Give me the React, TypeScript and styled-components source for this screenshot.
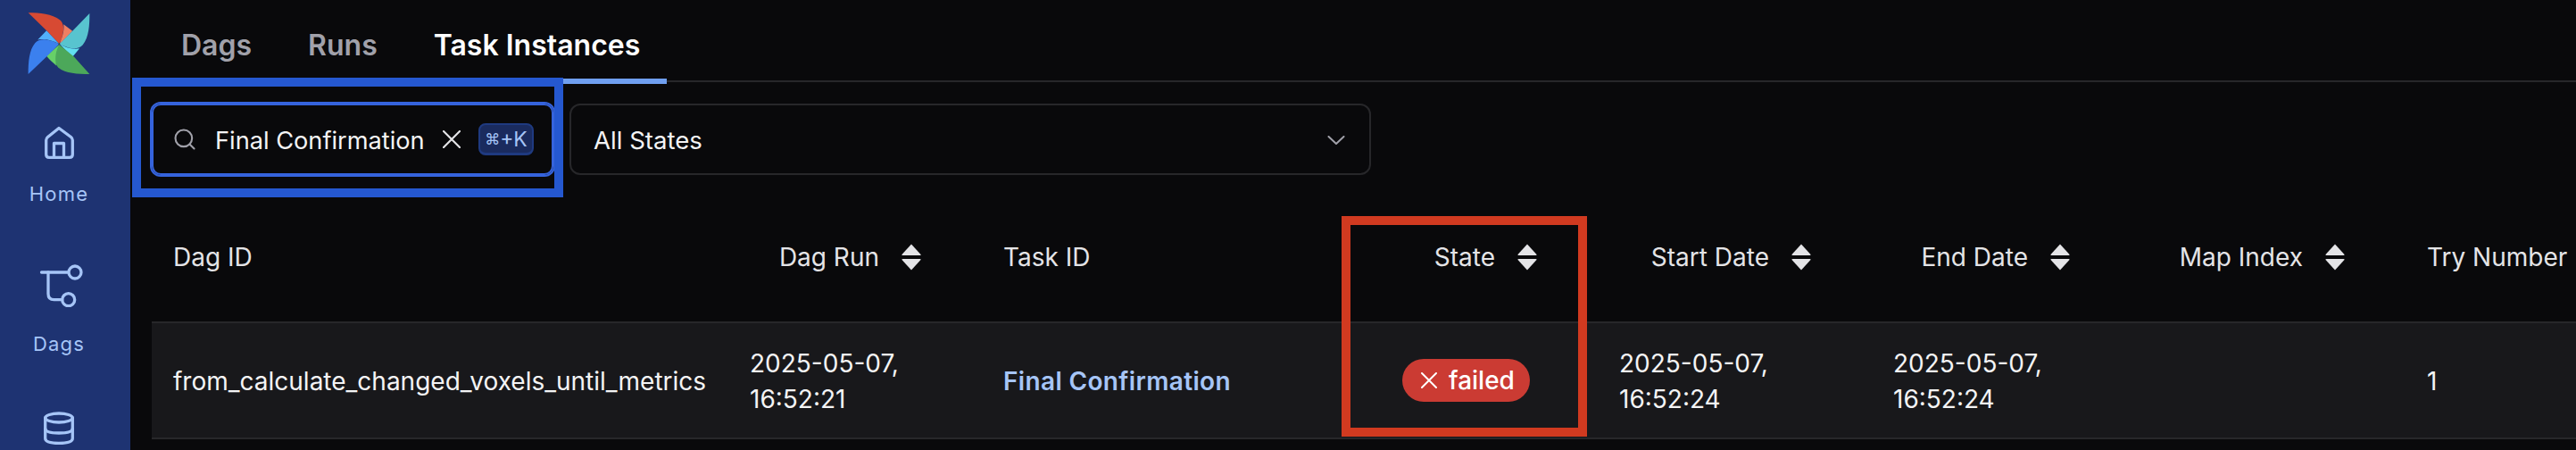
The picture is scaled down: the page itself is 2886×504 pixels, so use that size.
import React, { FC } from 'react';
import styled, { createGlobalStyle } from 'styled-components';
import { Search } from 'lucide-react';

const GlobalStyle = createGlobalStyle`
	html,
	body {
		margin: 0;
		padding: 0;
		background: #09090b;
	}
	* {
		box-sizing: border-box;
	}
`;

const Page = styled.div`
	position: relative;
	display: flex;
	width: 2886px;
	height: 504px;
	overflow: hidden;
	background: #09090b;
	font-family: Inter, 'Noto Sans', sans-serif;
	color: #f4f4f5;
`;

const Sidebar = styled.nav`
	flex: 0 0 146px;
	display: flex;
	flex-direction: column;
	align-items: center;
	padding: 14px 14px 0 0;
	background: #1e3372;
	color: #a6c5f7;
`;

const LogoMark = styled.svg`
	display: block;
	flex: none;
	width: 70px;
	height: 70px;
	margin-bottom: 52px;
`;

const NavItem = styled.div<{ $height: number }>`
	display: flex;
	flex-direction: column;
	align-items: center;
	flex: none;
	height: ${({ $height }) => $height}px;
`;

const NavIcon = styled.svg`
	display: block;
	flex: none;
	height: 48px;
	fill: none;
	stroke: currentColor;
	stroke-width: 3.3;
	stroke-linecap: round;
	stroke-linejoin: round;
`;

const NavLabel = styled.span<{ $gap: number }>`
	margin-top: ${({ $gap }) => $gap}px;
	font-size: 22px;
	line-height: 28px;
	letter-spacing: 1.2px;
`;

const Main = styled.main`
	flex: 1;
	min-width: 0;
	padding-left: 24px;
`;

const TabList = styled.div`
	display: flex;
	height: 92px;
	border-bottom: 2px solid #27272a;
`;

const Tab = styled.div<{ $active?: boolean }>`
	height: 94px;
	padding: 31px 30px 0 33px;
	font-size: 32px;
	line-height: 40px;
	font-weight: 600;
	color: ${({ $active }) => ($active ? '#ffffff' : '#a1a1aa')};
	border-bottom: 6px solid ${({ $active }) => ($active ? '#6f9ff0' : 'transparent')};
`;

const FilterRow = styled.div`
	display: flex;
	gap: 18px;
	margin-top: 24px;
`;

const SearchField = styled.div`
	display: flex;
	align-items: center;
	flex: 0 0 450px;
	height: 80px;
	padding: 0 20px 0 21px;
	border: 2px solid #3563dc;
	border-radius: 10px;
	box-shadow: 0 0 0 2px #3563dc;
	font-size: 27.2px;
	color: #f4f4f5;
`;

const SearchIcon = styled(Search)`
	flex: none;
	color: #a1a1aa;
`;

const SearchText = styled.span`
	margin-left: 20px;
	padding-top: 2px;
	white-space: nowrap;
`;

const ClearIcon = styled.svg`
	flex: none;
	width: 20px;
	height: 20px;
	margin-left: 20px;
	fill: none;
	stroke: #e4e4e7;
	stroke-width: 2.2;
	stroke-linecap: round;
`;

const Kbd = styled.kbd`
	display: flex;
	align-items: center;
	justify-content: center;
	flex: none;
	width: 62px;
	height: 36px;
	margin-left: auto;
	border: 2px solid #1f3a80;
	border-bottom-width: 3px;
	border-radius: 8px;
	background: #1a2b5e;
	color: #a6c5f7;
	font-family: Inter, sans-serif;
	font-size: 23px;
`;

const KbdCommand = styled.span`
	font-family: 'DejaVu Sans', sans-serif;
	font-size: 17px;
`;

const SelectBox = styled.div`
	display: flex;
	align-items: center;
	justify-content: space-between;
	flex: 0 0 898px;
	height: 80px;
	padding: 2px 27px 0 25px;
	border: 2px solid #27272a;
	border-radius: 12px;
	font-size: 27.6px;
	color: #f4f4f5;
`;

const Chevron = styled.svg`
	flex: none;
	width: 20px;
	height: 10px;
	fill: none;
	stroke: #a1a1aa;
	stroke-width: 2;
	stroke-linecap: round;
	stroke-linejoin: round;
`;

const columns = '646px 284px 447px 243px 307px 290px 308px 1fr';

const HeaderRow = styled.div`
	display: grid;
	grid-template-columns: ${columns};
	height: 146px;
	margin-top: 20px;
	border-bottom: 2px solid #27272a;
`;

const HeaderCell = styled.div<{ $sortable?: boolean }>`
	display: flex;
	align-items: center;
	justify-content: ${({ $sortable }) => ($sortable ? 'flex-end' : 'flex-start')};
	gap: 25px;
	padding: 0 ${({ $sortable }) => ($sortable ? '68px' : '0')} 0 24px;
	font-size: 28px;
	color: #e4e4e7;
	white-space: nowrap;
`;

const SortIcon = styled.svg`
	display: block;
	flex: none;
	width: 22px;
	height: 30px;
	fill: #e4e4e7;
`;

const BodyRow = styled.div`
	display: grid;
	grid-template-columns: ${columns};
	height: 130px;
	background: #18181b;
	border-bottom: 2px solid #27272a;
`;

const BodyCell = styled.div`
	display: flex;
	align-items: center;
	padding: 2px 24px 0;
	font-size: 28px;
	line-height: 40px;
	color: #f4f4f5;
	white-space: nowrap;
`;

const TaskLink = styled.span`
	font-weight: 600;
	letter-spacing: 0.35px;
	color: #a6c5f7;
`;

const StateBadge = styled.span`
	display: inline-flex;
	align-items: center;
	gap: 13px;
	height: 48px;
	margin-top: -2px;
	padding: 0 17px 0 21px;
	border-radius: 24px;
	background: #cb3b33;
	color: #ffffff;
	font-size: 28px;
	font-weight: 500;
`;

const BadgeIcon = styled.svg`
	flex: none;
	width: 18px;
	height: 18px;
	fill: none;
	stroke: #ffffff;
	stroke-width: 2;
	stroke-linecap: round;
`;

const Annotation = styled.div<{ $x: number; $y: number; $w: number; $h: number; $color: string }>`
	position: absolute;
	left: ${({ $x }) => $x}px;
	top: ${({ $y }) => $y}px;
	width: ${({ $w }) => $w}px;
	height: ${({ $h }) => $h}px;
	border: 10px solid ${({ $color }) => $color};
`;

const Logo: FC = () => (
	<LogoMark viewBox="93 42 212 212">
		<path fill="#d74a33" d="M95 43 C135 43 175 46 203 68 C212 76 216 90 214 104 C212 122 206 138 200 148 L157 103 Z" />
		<path fill="#ef7f62" d="M215 82 L245 105 L201 150 C208 130 218 108 215 82 Z" />
		<path fill="#58c4cf" d="M303 45 C303 85 301 125 280 152 C272 162 258 166 244 164 C228 162 214 156 201 149 L245 105 Z" />
		<path fill="#62dff0" d="M201 149 C222 162 245 168 269 164 L245 193 Z" />
		<path fill="#4ca85a" d="M303 251 C262 251 222 249 197 229 C186 218 182 205 184 190 C186 176 192 162 200 151 L250 192 Z" />
		<path fill="#67d068" d="M200 151 C190 170 184 192 190 222 C178 212 166 202 157 190 Z" />
		<path fill="#3b80ee" d="M95 251 C95 210 98 170 118 146 C126 136 140 132 155 134 C172 136 187 142 200 149 L157 192 Z" />
		<path fill="#52b0fa" d="M200 149 C178 136 152 130 127 134 L157 103 Z" />
		<circle cx="200" cy="149" r="3" fill="#3a4a4a" />
	</LogoMark>
);

const SortGlyph: FC = () => (
	<SortIcon viewBox="0 0 22 30">
		<path d="M11 0.5 L21.5 12 Q22 13 20.5 13 H1.5 Q0 13 0.5 12 Z" />
		<path d="M11 29.5 L21.5 18 Q22 17 20.5 17 H1.5 Q0 17 0.5 18 Z" />
	</SortIcon>
);

const headers = [
	{ label: 'Dag ID' },
	{ label: 'Dag Run', sortable: true },
	{ label: 'Task ID' },
	{ label: 'State', sortable: true },
	{ label: 'Start Date', sortable: true },
	{ label: 'End Date', sortable: true },
	{ label: 'Map Index', sortable: true },
	{ label: 'Try Number' },
];

export default function App() {
	return (
		<Page>
			<GlobalStyle />
			<Sidebar>
				<Logo />
				<NavItem $height={160}>
					<NavIcon width="48" viewBox="0 0 48 48">
						<path d="M24 7.5 L37.5 17.5 Q39.3 19 39.3 21 V37 Q39.3 40.4 36 40.4 H13 Q9.7 40.4 9.7 37 V21 Q9.7 19 11.5 17.5 Z" />
						<path d="M18.5 40 V24.5 H29.5 V40" />
					</NavIcon>
					<NavLabel $gap={19}>Home</NavLabel>
				</NavItem>
				<NavItem $height={160}>
					<NavIcon width="54" viewBox="0 0 54 48">
						<path d="M7.5 9 H37" />
						<circle cx="45" cy="9" r="7" />
						<path d="M15 9 V33 Q15 39.7 21.5 39.7 H30.7" />
						<circle cx="37.7" cy="39.7" r="7" />
					</NavIcon>
					<NavLabel $gap={27}>Dags</NavLabel>
				</NavItem>
				<NavItem $height={48}>
					<NavIcon width="48" viewBox="0 0 48 48">
						<ellipse cx="24" cy="12" rx="15.3" ry="5" />
						<path d="M8.7 12 V35 Q8.7 40.4 24 40.4 Q39.3 40.4 39.3 35 V12" />
						<path d="M8.7 24 Q8.7 29 24 29 Q39.3 29 39.3 24" />
					</NavIcon>
				</NavItem>
			</Sidebar>
			<Main>
				<TabList>
					<Tab>Dags</Tab>
					<Tab>Runs</Tab>
					<Tab $active>Task Instances</Tab>
				</TabList>
				<FilterRow>
					<SearchField>
						<SearchIcon size={28} strokeWidth={1.8} />
						<SearchText>Final Confirmation</SearchText>
						<ClearIcon viewBox="0 0 20 20">
							<path d="M1 1 L19 19 M19 1 L1 19" />
						</ClearIcon>
						<Kbd>
							<KbdCommand>⌘</KbdCommand>+K
						</Kbd>
					</SearchField>
					<SelectBox>
						All States
						<Chevron viewBox="0 0 20 10">
							<path d="M1.5 1 L10 9 L18.5 1" />
						</Chevron>
					</SelectBox>
				</FilterRow>
				<HeaderRow>
					{headers.map(({ label, sortable }) => (
						<HeaderCell key={label} $sortable={sortable}>
							{label}
							{sortable && <SortGlyph />}
						</HeaderCell>
					))}
				</HeaderRow>
				<BodyRow>
					<BodyCell>from_calculate_changed_voxels_until_metrics</BodyCell>
					<BodyCell>
						2025-05-07,
						<br />
						16:52:21
					</BodyCell>
					<BodyCell>
						<TaskLink>Final Confirmation</TaskLink>
					</BodyCell>
					<BodyCell>
						<StateBadge>
							<BadgeIcon viewBox="0 0 18 18">
								<path d="M1 1 L17 17 M17 1 L1 17" />
							</BadgeIcon>
							failed
						</StateBadge>
					</BodyCell>
					<BodyCell>
						2025-05-07,
						<br />
						16:52:24
					</BodyCell>
					<BodyCell>
						2025-05-07,
						<br />
						16:52:24
					</BodyCell>
					<BodyCell />
					<BodyCell>1</BodyCell>
				</BodyRow>
			</Main>
			<Annotation $x={148} $y={87} $w={483} $h={134} $color="#2558d0" />
			<Annotation $x={1503} $y={242} $w={275} $h={247} $color="#d13a20" />
		</Page>
	);
}
